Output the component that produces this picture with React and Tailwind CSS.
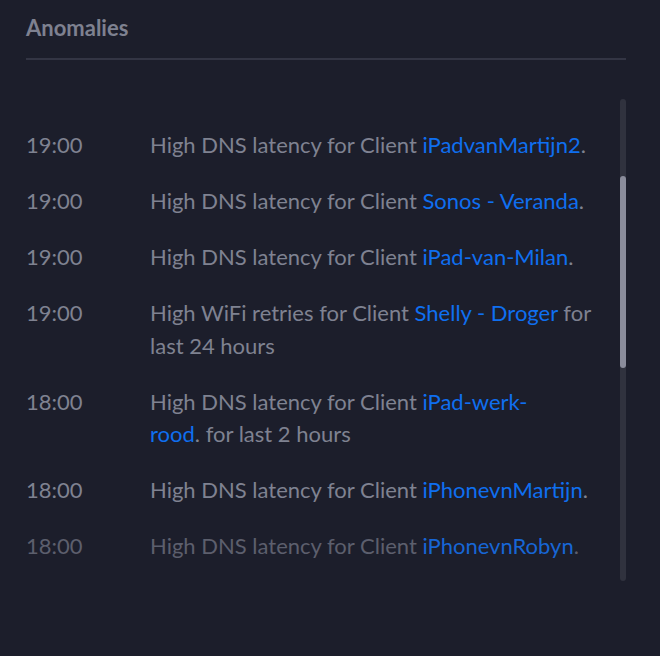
export default function App() {
  const rows = [
    { t: "19:00", pre: "High DNS latency for Client ", link: "iPadvanMartijn2", post: "." },
    { t: "19:00", pre: "High DNS latency for Client ", link: "Sonos - Veranda", post: "." },
    { t: "19:00", pre: "High DNS latency for Client ", link: "iPad-van-Milan", post: "." },
    { t: "19:00", pre: "High WiFi retries for Client ", link: "Shelly - Droger", post: " for last 24 hours" },
    { t: "18:00", pre: "High DNS latency for Client ", link: "iPad-werk-rood", post: ".\u00a0for last 2 hours" },
    { t: "18:00", pre: "High DNS latency for Client ", link: "iPhonevnMartijn", post: "." },
    { t: "18:00", pre: "High DNS latency for Client ", link: "iPhonevnRobyn", post: ".", fade: true },
  ];
  return (
    <div
      className="w-[660px] h-[656px] bg-[#1c1e2b] pl-[26px] pr-[34px] pt-[14px]"
      style={{ fontFamily: "Lato, 'Open Sans', sans-serif" }}
    >
      <div className="text-[22px] leading-[28px] font-bold text-[#7e8190]">Anomalies</div>
      <div className="mt-[16px] h-[2px] bg-[#333544]" />
      <div className="mt-[39px] flex h-[482px]">
        <div className="flex-1 pt-[30px] flex flex-col gap-[23.5px]">
          {rows.map((r, i) => (
            <div
              key={i}
              className={
                "flex text-[22px] leading-[32.5px] " +
                (r.fade ? "text-[#5c5f6d]" : "text-[#7f8291]")
              }
            >
              <div className="w-[124px] shrink-0">{r.t}</div>
              <div className="w-[448px]">
                {r.pre}
                <span className={r.fade ? "text-[#1766d6]" : "text-[#0f6ff0]"}>{r.link}</span>
                {r.post}
              </div>
            </div>
          ))}
        </div>
        <div className="w-[6px] rounded-full bg-[#30323e] flex flex-col pt-[77px]">
          <div className="h-[192px] w-[6px] rounded-full bg-[#8a8c9b]" />
        </div>
      </div>
    </div>
  );
}
